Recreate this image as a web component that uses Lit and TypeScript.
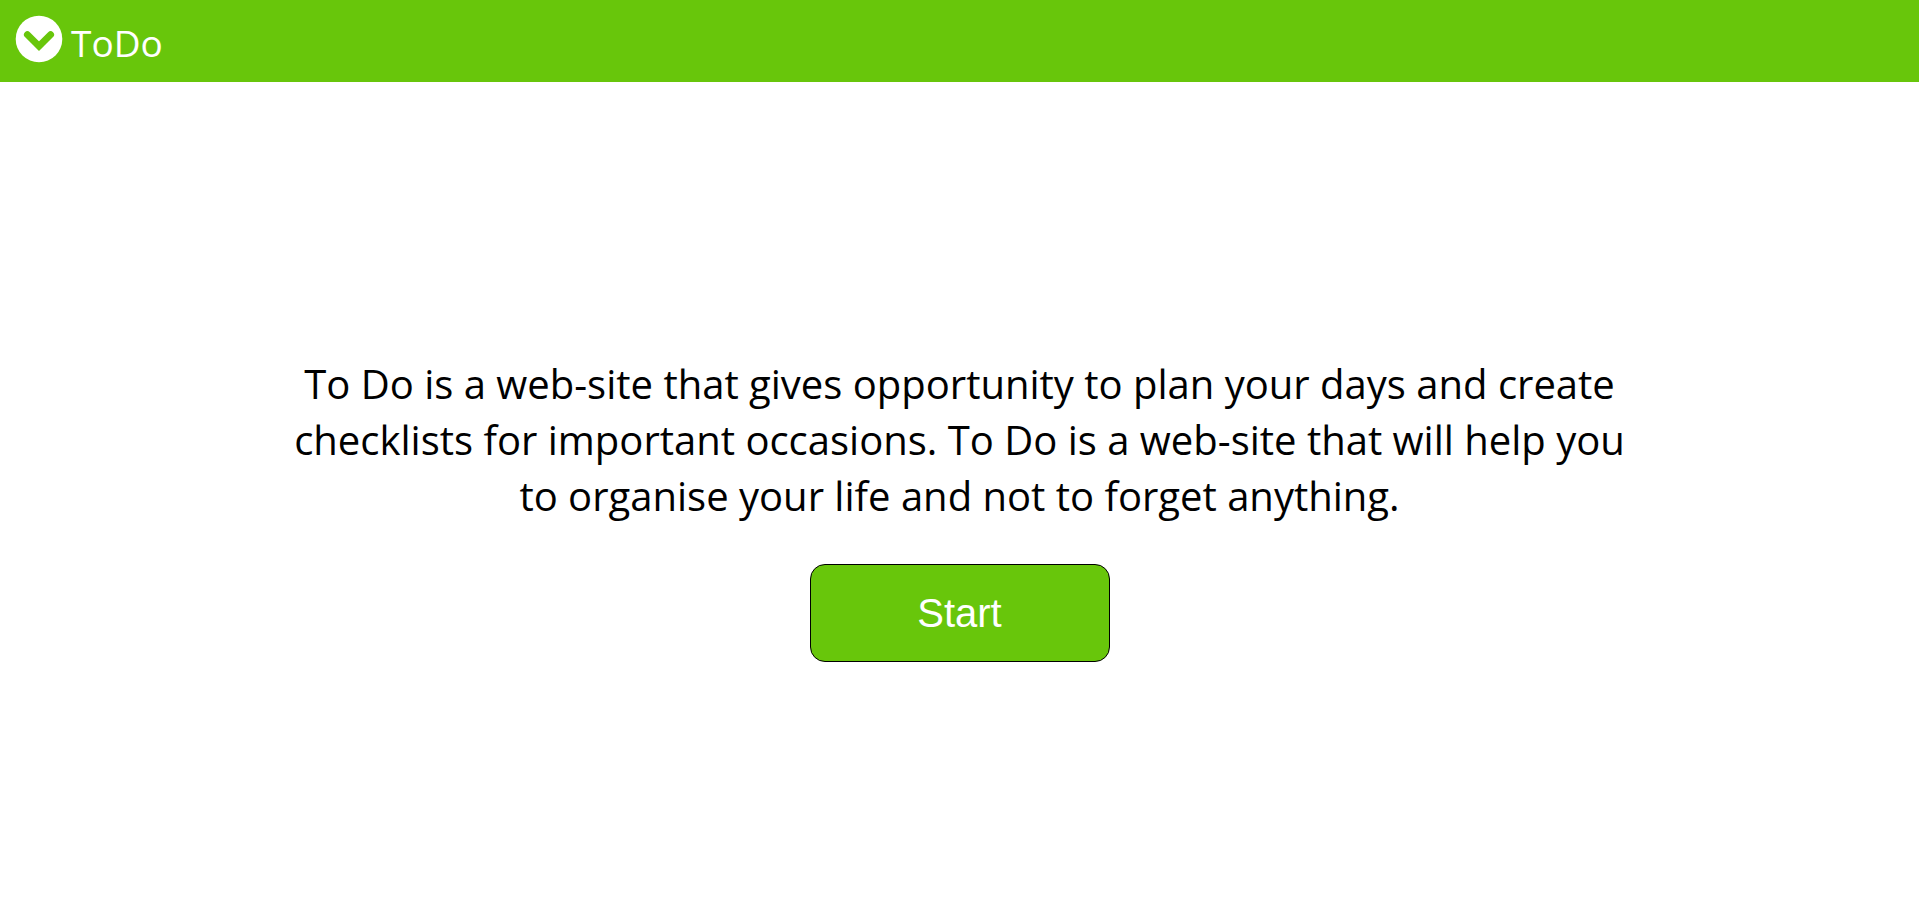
import { LitElement, html, css } from "lit";
import { customElement } from "lit/decorators.js";

@customElement("app-root")
export class AppRoot extends LitElement {
  static styles = css`
    :host {
      display: flex;
      flex-direction: column;
      min-height: 100vh;
      background: #ffffff;
      color: #000000;
      font-family: "Segoe UI", "Open Sans", "Noto Sans", sans-serif;
    }
    .header {
      display: flex;
      background: #68c60b;
      padding: 15px 15px 11px;
    }
    .brand {
      display: flex;
      gap: 8px;
      color: #ffffff;
      font-size: 37px;
      line-height: 56px;
      text-decoration: none;
    }
    .logo {
      width: 48px;
      height: 48px;
    }
    .main {
      flex: 1;
      display: flex;
      flex-direction: column;
      align-items: center;
      justify-content: center;
      gap: 40px;
      padding: 26px 280px 0;
    }
    .intro {
      margin: 0;
      font-size: 40px;
      line-height: 56px;
      text-align: center;
    }
    .start {
      width: 300px;
      padding: 24px;
      border: 1px solid #000000;
      border-radius: 15px;
      background: #68c60b;
      color: #ffffff;
      font-family: Arial, "Liberation Sans", sans-serif;
      font-size: 40px;
      line-height: 48px;
      cursor: pointer;
    }
  `;

  render() {
    return html`
      <header class="header">
        <a class="brand" href="#">
          <svg class="logo" viewBox="0 0 48 48" aria-hidden="true">
            <circle cx="24" cy="24" r="23.3" fill="#ffffff" />
            <path d="M12.4 19.6L24 31.1L35.6 19.6" fill="none" stroke="#68c60b" stroke-width="6.9" stroke-linecap="round" />
          </svg>
          <span>ToDo</span>
        </a>
      </header>
      <main class="main">
        <p class="intro">
          To Do is a web-site that gives opportunity to plan your days and create
          checklists for important occasions. To Do is a web-site that will help you
          to organise your life and not to forget anything.
        </p>
        <button class="start" type="button">Start</button>
      </main>
    `;
  }
}
